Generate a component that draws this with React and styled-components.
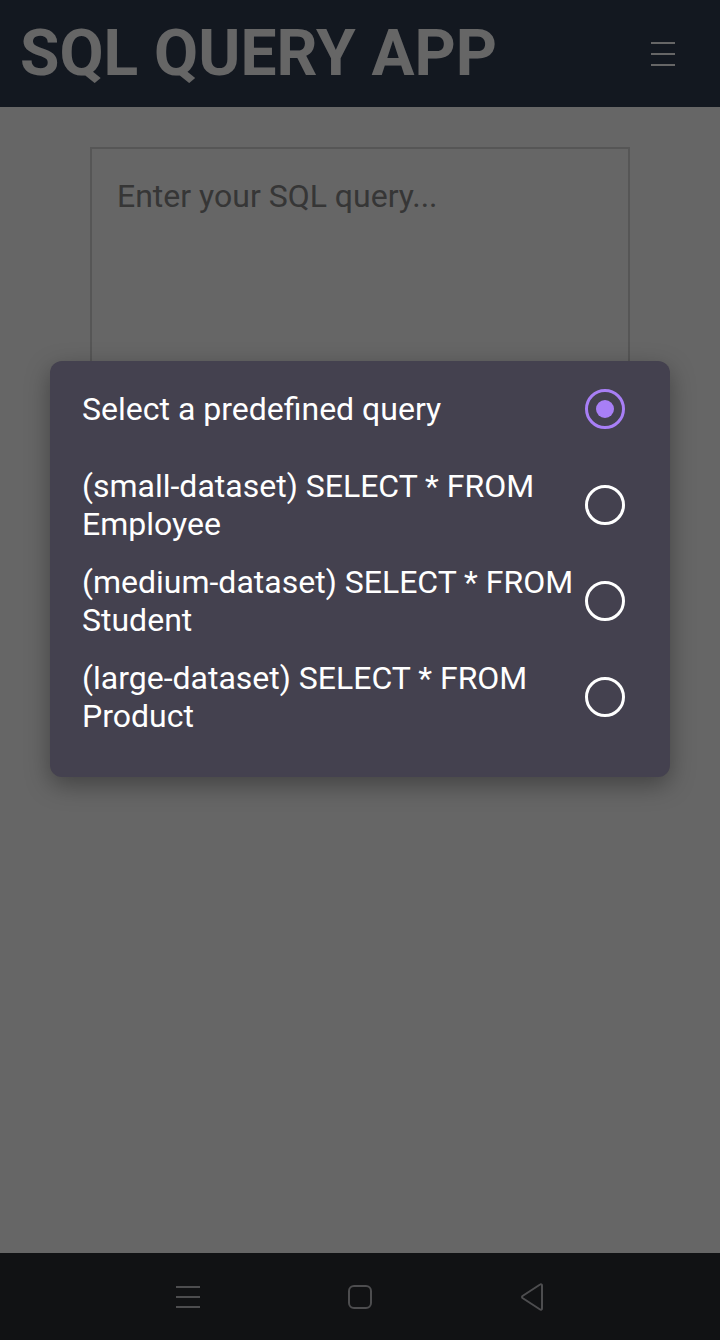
import React, { useState } from 'react';
import styled, { createGlobalStyle } from 'styled-components';

const QUERIES = [
  { id: 'none', label: 'Select a predefined query' },
  { id: 'small', label: '(small-dataset) SELECT * FROM Employee' },
  { id: 'medium', label: '(medium-dataset) SELECT * FROM Student' },
  { id: 'large', label: '(large-dataset) SELECT * FROM Product' },
];

const App = () => {
  const [selected, setSelected] = useState('none');

  return (
    <Phone>
      <GlobalStyle />
      <Screen>
        <Header>
          <Title>SQL QUERY APP</Title>
          <MenuButton aria-label="Menu">
            <svg width="24" height="24" viewBox="0 0 24 24">
              <path d="M0 1h24M0 12h24M0 23h24" stroke="currentColor" strokeWidth="2" />
            </svg>
          </MenuButton>
        </Header>
        <Main>
          <QueryInput placeholder="Enter your SQL query..." />
        </Main>

        {/* predefined query picker, open over a scrim */}
        <Scrim>
          <Dialog role="radiogroup">
            {QUERIES.map((q) => (
              <OptionRow key={q.id} onClick={() => setSelected(q.id)}>
                <OptionText>{q.label}</OptionText>
                <RadioBox>
                  <Radio checked={selected === q.id} />
                </RadioBox>
              </OptionRow>
            ))}
          </Dialog>
        </Scrim>
      </Screen>

      <NavBar>
        <NavButton aria-label="Recent apps">
          <svg width="26" height="24" viewBox="0 0 26 24">
            <path d="M1 2h24M1 12h24M1 22h24" stroke="currentColor" strokeWidth="2" />
          </svg>
        </NavButton>
        <NavButton aria-label="Home">
          <svg width="26" height="26" viewBox="0 0 26 26">
            <rect x="2" y="2" width="22" height="22" rx="5" fill="none" stroke="currentColor" strokeWidth="2" />
          </svg>
        </NavButton>
        <NavButton aria-label="Back">
          <svg width="28" height="30" viewBox="0 0 28 30">
            <path
              d="M24 3.5v23a1.2 1.2 0 0 1-1.9 1L4.5 16a1.3 1.3 0 0 1 0-2L22.1 2.5a1.2 1.2 0 0 1 1.9 1z"
              fill="none"
              stroke="currentColor"
              strokeWidth="2"
              strokeLinejoin="round"
            />
          </svg>
        </NavButton>
      </NavBar>
    </Phone>
  );
};

const GlobalStyle = createGlobalStyle`
  * {
    box-sizing: border-box;
  }
  body {
    margin: 0;
    font-family: Roboto, "Noto Sans", sans-serif;
    background: #111214;
  }
`;

const Phone = styled.div`
  height: 1340px;
  display: flex;
  flex-direction: column;
`;

const Screen = styled.div`
  position: relative;
  flex: 1;
  display: flex;
  flex-direction: column;
  background: #ffffff;
`;

const Header = styled.header`
  height: 107px;
  display: flex;
  align-items: center;
  justify-content: space-between;
  padding: 0 45px 0 20px;
  background: #303c52;
`;

const Title = styled.h1`
  margin: 0;
  font-size: 64px;
  font-weight: 700;
  color: #ffffff;
`;

const MenuButton = styled.button`
  display: flex;
  padding: 0;
  border: none;
  background: none;
  color: #ffffff;
`;

const Main = styled.main`
  display: flex;
  flex-direction: column;
  align-items: center;
  padding-top: 40px;
`;

const QueryInput = styled.textarea`
  width: 540px;
  height: 260px;
  padding: 28px 25px;
  border: 2px solid #d6d6d6;
  font-family: Roboto, sans-serif;
  font-size: 32px;
  resize: none;
  outline: none;
  &::placeholder {
    color: #878787;
  }
`;

const Scrim = styled.div`
  position: absolute;
  inset: 0;
  display: flex;
  flex-direction: column;
  align-items: center;
  padding-top: 361px;
  background: rgba(0, 0, 0, 0.6);
`;

const Dialog = styled.div`
  width: 620px;
  padding-bottom: 32px;
  border-radius: 12px;
  background: #44414f;
  box-shadow: 0 8px 24px rgba(0, 0, 0, 0.35);
`;

const OptionRow = styled.label`
  min-height: 96px;
  display: flex;
  align-items: center;
  gap: 4px;
  padding: 0 41px 0 32px;
  cursor: pointer;
`;

const OptionText = styled.span`
  flex: 1;
  font-size: 32px;
  line-height: 38px;
  color: #ffffff;
`;

const RadioBox = styled.span`
  width: 48px;
  height: 48px;
  display: flex;
  align-items: center;
  justify-content: center;
`;

const Radio = styled.span`
  width: 40px;
  height: 40px;
  border-radius: 50%;
  border: 3px solid ${(p) => (p.checked ? '#a87ff6' : '#ffffff')};
  display: flex;
  align-items: center;
  justify-content: center;
  &::after {
    content: '';
    width: 18px;
    height: 18px;
    border-radius: 50%;
    background: #a87ff6;
    display: ${(p) => (p.checked ? 'block' : 'none')};
  }
`;

const NavBar = styled.nav`
  height: 87px;
  display: flex;
  justify-content: center;
  align-items: center;
  background: #111214;
`;

const NavButton = styled.button`
  width: 172px;
  display: flex;
  justify-content: center;
  padding: 0;
  border: none;
  background: none;
  color: #4d4d4f;
`;

export default App;
